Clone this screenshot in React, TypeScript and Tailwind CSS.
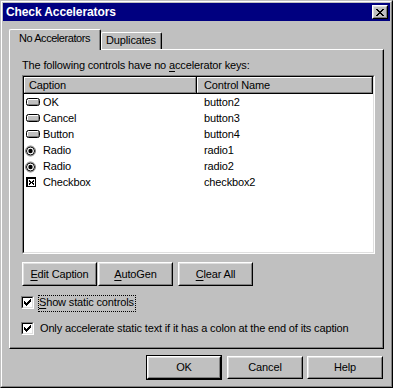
import React from "react";

const px = (pattern: string[], color = "#000", ox = 0, oy = 0) =>
  pattern.flatMap((row, y) =>
    row.split("").map((c, x) =>
      c === "#" ? <rect key={`${x}-${y}`} x={x + ox} y={y + oy} width={1} height={1} fill={color} /> : null
    )
  );

const CLOSE_X = [
  "##....##",
  ".##..##.",
  "..####..",
  "...##...",
  "..####..",
  ".##..##.",
  "##....##",
];

const CHECK = [
  "......#",
  ".....##",
  "#...###",
  "##.###.",
  "#####..",
  ".###...",
  "..#....",
];

const SMALL_X = [
  "#...#",
  "##.##",
  ".###.",
  "##.##",
  "#...#",
];

function Btn({
  children,
  className = "",
}: {
  children?: React.ReactNode;
  className?: string;
}) {
  return (
    <div className={`${className} border border-t-white border-l-white border-r-black border-b-black bg-[#c0c0c0] shrink-0`}>
      <div className="w-full h-full border border-t-[#dfdfdf] border-l-[#dfdfdf] border-r-[#808080] border-b-[#808080] flex items-center justify-center leading-[13px]">
        {children}
      </div>
    </div>
  );
}

function CheckBox() {
  return (
    <div className="w-[13px] h-[13px] border border-t-[#808080] border-l-[#808080] border-r-white border-b-white shrink-0">
      <div className="w-full h-full border border-t-black border-l-black border-r-[#dfdfdf] border-b-[#dfdfdf] bg-white">
        <svg width="9" height="9" className="block" shapeRendering="crispEdges">
          {px(CHECK, "#000", 1, 1)}
        </svg>
      </div>
    </div>
  );
}

function RowIcon({ kind }: { kind: string }) {
  if (kind === "btn")
    return (
      <svg width="16" height="16" className="block shrink-0">
        <rect x="1.5" y="4.5" width="13" height="7" rx="2" fill="#c0c0c0" stroke="#000" />
        <line x1="3" y1="5.5" x2="13" y2="5.5" stroke="#fff" />
        <line x1="2.5" y1="6" x2="2.5" y2="10" stroke="#fff" />
        <line x1="3" y1="10.5" x2="13" y2="10.5" stroke="#808080" />
        <line x1="13.5" y1="6" x2="13.5" y2="10" stroke="#808080" />
      </svg>
    );
  if (kind === "radio")
    return (
      <svg width="16" height="16" className="block shrink-0">
        <circle cx="5.5" cy="9" r="5" fill="#fff" stroke="#808080" />
        <circle cx="5.5" cy="9" r="4" fill="#fff" stroke="#000" />
        <circle cx="5.5" cy="9" r="2.2" fill="#000" />
      </svg>
    );
  return (
    <svg width="16" height="16" className="block shrink-0" shapeRendering="crispEdges">
      <rect x="1" y="3" width="10" height="10" fill="#000" />
      <rect x="3" y="5" width="7" height="7" fill="#fff" />
      {px(SMALL_X, "#000", 4, 6)}
    </svg>
  );
}

const ROWS = [
  { icon: "btn", cap: "OK", name: "button2" },
  { icon: "btn", cap: "Cancel", name: "button3" },
  { icon: "btn", cap: "Button", name: "button4" },
  { icon: "radio", cap: "Radio", name: "radio1" },
  { icon: "radio", cap: "Radio", name: "radio2" },
  { icon: "check", cap: "Checkbox", name: "checkbox2" },
];

export default function App() {
  return (
    <div className="w-[393px] h-[388px] bg-[#c0c0c0] border border-t-[#c0c0c0] border-l-[#c0c0c0] border-r-black border-b-black text-black text-[11px] tracking-[-0.15px] font-['Liberation_Sans',Arial,sans-serif]">
      <div className="w-full h-full border border-t-white border-l-white border-r-[#808080] border-b-[#808080] p-px flex flex-col">
        {/* Title bar */}
        <div className="h-[18px] bg-[#000080] flex items-center justify-between pl-[3px] pr-[2px] shrink-0">
          <span className="text-white font-bold text-[12px] leading-[16px] tracking-[-0.1px] mb-[1px]">
            Check Accelerators
          </span>
          <Btn className="w-[16px] h-[14px]">
            <svg width="8" height="7" className="block" shapeRendering="crispEdges">
              {px(CLOSE_X)}
            </svg>
          </Btn>
        </div>

        {/* Tabs + panel */}
        <div className="mx-[6px] mt-[8px]">
          <div className="flex items-end h-[20px]">
            <div className="relative z-10 w-[92px] h-[21px] -mb-px bg-[#c0c0c0] border-t border-l border-r border-t-white border-l-white border-r-black rounded-tl-[2px] rounded-tr-[2px]">
              <div className="h-full border-r border-r-[#808080] pt-[2px] text-center leading-[13px] tracking-[-0.45px]">
                No Accelerators
              </div>
            </div>
            <div className="w-[61px] h-[17px] bg-[#c0c0c0] border-t border-l border-r border-t-white border-l-white border-r-black rounded-tl-[2px] rounded-tr-[2px]">
              <div className="h-full border-r border-r-[#808080] pt-[1px] text-center leading-[13px]">
                Duplicates
              </div>
            </div>
          </div>

          <div className="h-[300px] border border-t-white border-l-white border-r-black border-b-black">
            <div className="h-full border-r border-b border-r-[#808080] border-b-[#808080] pl-[12px] pt-[9px] flex flex-col">
              <div className="leading-[13px] h-[13px]">
                The following controls have no <span className="underline underline-offset-2">a</span>ccelerator keys:
              </div>

              {/* List */}
              <div className="mt-[3px] w-[353px] h-[179px] border border-t-[#808080] border-l-[#808080] border-r-white border-b-white">
                <div className="w-full h-full border border-t-black border-l-black border-r-[#dfdfdf] border-b-[#dfdfdf] bg-white flex flex-col">
                  <div className="flex h-[17px] shrink-0">
                    <div className="w-[173px] h-full bg-[#c0c0c0] border-r border-b border-r-black border-b-black">
                      <div className="h-full border-t border-l border-r border-b border-t-white border-l-white border-r-[#808080] border-b-[#808080] pl-[4px] leading-[14px]">
                        Caption
                      </div>
                    </div>
                    <div className="flex-1 h-full bg-[#c0c0c0] border-r border-b border-r-black border-b-black">
                      <div className="h-full border-t border-l border-r border-b border-t-white border-l-white border-r-[#808080] border-b-[#808080] pl-[6px] leading-[14px]">
                        Control Name
                      </div>
                    </div>
                  </div>
                  {ROWS.map((r, i) => (
                    <div key={i} className="flex h-[16px] leading-[16px]">
                      <div className="w-[173px] flex items-center pl-[1px]">
                        <RowIcon kind={r.icon} />
                        <span className="ml-[2px]">{r.cap}</span>
                      </div>
                      <div className="pl-[7px]">{r.name}</div>
                    </div>
                  ))}
                </div>
              </div>

              {/* Action buttons */}
              <div className="flex mt-[8px]">
                <Btn className="w-[75px] h-[24px]">
                  <span><span className="underline underline-offset-2">E</span>dit Caption</span>
                </Btn>
                <Btn className="w-[75px] h-[24px] ml-[1px]">
                  <span><span className="underline underline-offset-2">A</span>utoGen</span>
                </Btn>
                <Btn className="w-[75px] h-[24px] ml-[5px]">
                  <span><span className="underline underline-offset-2">C</span>lear All</span>
                </Btn>
              </div>

              {/* Checkboxes */}
              <div className="flex items-start mt-[9px] -ml-px">
                <div className="mt-[1px]">
                  <CheckBox />
                </div>
                <div className="ml-[4px] h-[17px] border border-dotted border-black leading-[13px] pr-[1px]">
                  <span className="underline underline-offset-2">S</span>how static controls
                </div>
              </div>
              <div className="flex items-center mt-[10px] -ml-px">
                <CheckBox />
                <div className="ml-[6px] leading-[13px]">
                  Only accelerate static text if it has a colon at the end of its caption
                </div>
              </div>
            </div>
          </div>
        </div>

        {/* Dialog buttons */}
        <div className="flex justify-end items-center pr-[7px] mt-[6px] h-[25px]">
          <div className="w-[76px] h-[25px] border border-black">
            <Btn className="w-full h-full">OK</Btn>
          </div>
          <Btn className="w-[76px] h-[23px] ml-[5px]">Cancel</Btn>
          <Btn className="w-[76px] h-[23px] ml-[4px]">Help</Btn>
        </div>
      </div>
    </div>
  );
}
